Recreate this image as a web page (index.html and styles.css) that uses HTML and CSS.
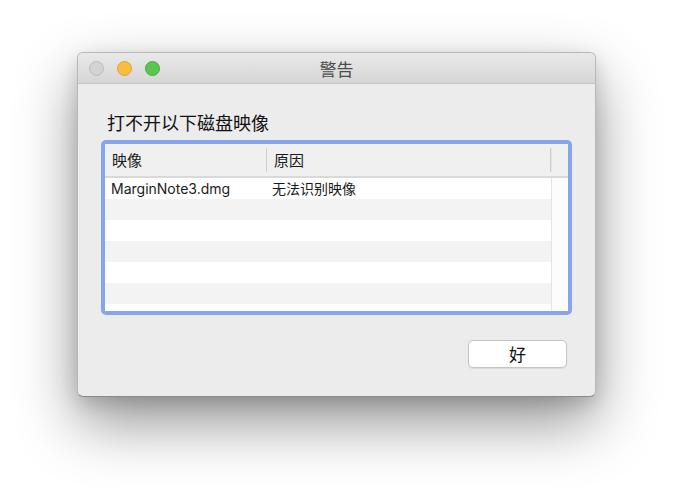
FILE: index.html
```html
<!DOCTYPE html>
<html lang="zh-CN">
<head>
<meta charset="utf-8">
<title>警告</title>
<link rel="stylesheet" href="styles.css">
</head>
<body>
<div class="window">
  <div class="titlebar">
    <div class="lights">
      <span class="light close"></span>
      <span class="light min"></span>
      <span class="light max"></span>
    </div>
    <div class="title">警告</div>
  </div>
  <div class="content">
    <div class="heading">打不开以下磁盘映像</div>
    <div class="frame">
      <div class="thead">
        <div class="th">映像</div>
        <div class="th">原因</div>
        <div class="th th-end"></div>
      </div>
      <div class="tbody">
        <div class="rows">
          <div class="row"><div class="td c1">MarginNote3.dmg</div><div class="td">无法识别映像</div></div>
          <div class="row alt"></div>
          <div class="row"></div>
          <div class="row alt"></div>
          <div class="row"></div>
          <div class="row alt"></div>
          <div class="row"></div>
        </div>
        <div class="scroll"></div>
      </div>
    </div>
    <div class="footer">
      <button class="btn">好</button>
    </div>
  </div>
</div>
</body>
</html>
```
FILE: styles.css
```css
html, body {
  margin: 0;
  padding: 0;
  background: #ffffff;
}
body {
  width: 674px;
  height: 500px;
  overflow: hidden;
  font-family: "Inter", "Noto Sans CJK SC", sans-serif;
  color: #1a1a1a;
}
.window {
  margin: 52px 0 0 77px;
  width: 519px;
  height: 345px;
  box-sizing: border-box;
  border-radius: 6px;
  background: #ececec;
  border: 1px solid #b8b8b8;
  border-bottom-color: #8a8a8a;
  box-shadow: 0 26px 60px rgba(0, 0, 0, 0.42), 0 6px 18px rgba(0, 0, 0, 0.14);
  display: flex;
  flex-direction: column;
  overflow: hidden;
}
.titlebar {
  height: 31px;
  box-sizing: border-box;
  border-bottom: 1px solid #c4c4c4;
  background: linear-gradient(#e9e9e9, #d6d6d6);
  display: flex;
  align-items: center;
  position: relative;
}
.lights {
  display: flex;
  gap: 13px;
  padding-left: 11px;
}
.light {
  width: 15px;
  height: 15px;
  box-sizing: border-box;
  border-radius: 50%;
  border: 1px solid;
}
.close { background: #d3d3d3; border-color: #bdbdbd; }
.min { background: #f8bd3e; border-color: #dda23a; }
.max { background: #5ac64d; border-color: #4aaa3d; }
.title {
  position: absolute;
  left: 0;
  right: 0;
  top: 0;
  bottom: 0;
  display: flex;
  align-items: center;
  justify-content: center;
  font-family: "Noto Sans CJK SC", sans-serif;
  font-size: 17px;
  color: #4b4b4b;
  pointer-events: none;
}
.content {
  padding: 26px 23px 0 23px;
  display: flex;
  flex-direction: column;
}
.heading {
  font-family: "Noto Sans CJK SC", sans-serif;
  font-size: 18px;
  line-height: 24px;
  padding-left: 6px;
  color: #111;
}
.frame {
  margin-top: 6px;
  width: 471px;
  height: 175px;
  box-sizing: border-box;
  border: 4px solid #86a5ec;
  border-radius: 5px;
  background: #ffffff;
  display: flex;
  flex-direction: column;
  overflow: hidden;
}
.thead {
  height: 34px;
  box-sizing: border-box;
  border-bottom: 2px solid #d9d9d9;
  background: #f0f0f0;
  display: grid;
  grid-template-columns: 162px 284px 1fr;
  align-items: center;
}
.th {
  font-family: "Noto Sans CJK SC", sans-serif;
  font-size: 15px;
  padding-left: 7px;
  height: 24px;
  line-height: 24px;
  border-right: 1px solid #cfcfcf;
}
.th-end {
  padding-left: 0;
  border-left: 1px solid #e2e2e2;
  border-right: none;
  height: 24px;
}
.tbody {
  flex: 1;
  display: flex;
  min-height: 0;
}
.rows {
  width: 446px;
  display: flex;
  flex-direction: column;
}
.row {
  height: 21px;
  flex: none;
  display: grid;
  grid-template-columns: 162px 1fr;
  align-items: center;
  background: #ffffff;
}
.row.alt {
  background: #f3f3f3;
}
.td {
  font-size: 14px;
  line-height: 21px;
  padding-left: 5px;
  font-family: "Noto Sans CJK SC", sans-serif;
}
.td.c1 {
  font-family: "Inter", "Noto Sans CJK SC", sans-serif;
  padding-left: 6px;
}
.scroll {
  flex: 1;
  background: #fcfcfc;
  border-left: 1px solid #e4e4e4;
}
.footer {
  margin-top: 25px;
  display: flex;
  justify-content: flex-end;
  padding-right: 5px;
}
.btn {
  width: 99px;
  height: 28px;
  box-sizing: border-box;
  border: 1px solid #c4c4c4;
  border-radius: 5px;
  background: #ffffff;
  font-family: "Noto Sans CJK SC", sans-serif;
  font-size: 17px;
  color: #111;
  padding: 0;
  line-height: 24px;
  box-shadow: 0 0.5px 1px rgba(0, 0, 0, 0.08);
}
```
